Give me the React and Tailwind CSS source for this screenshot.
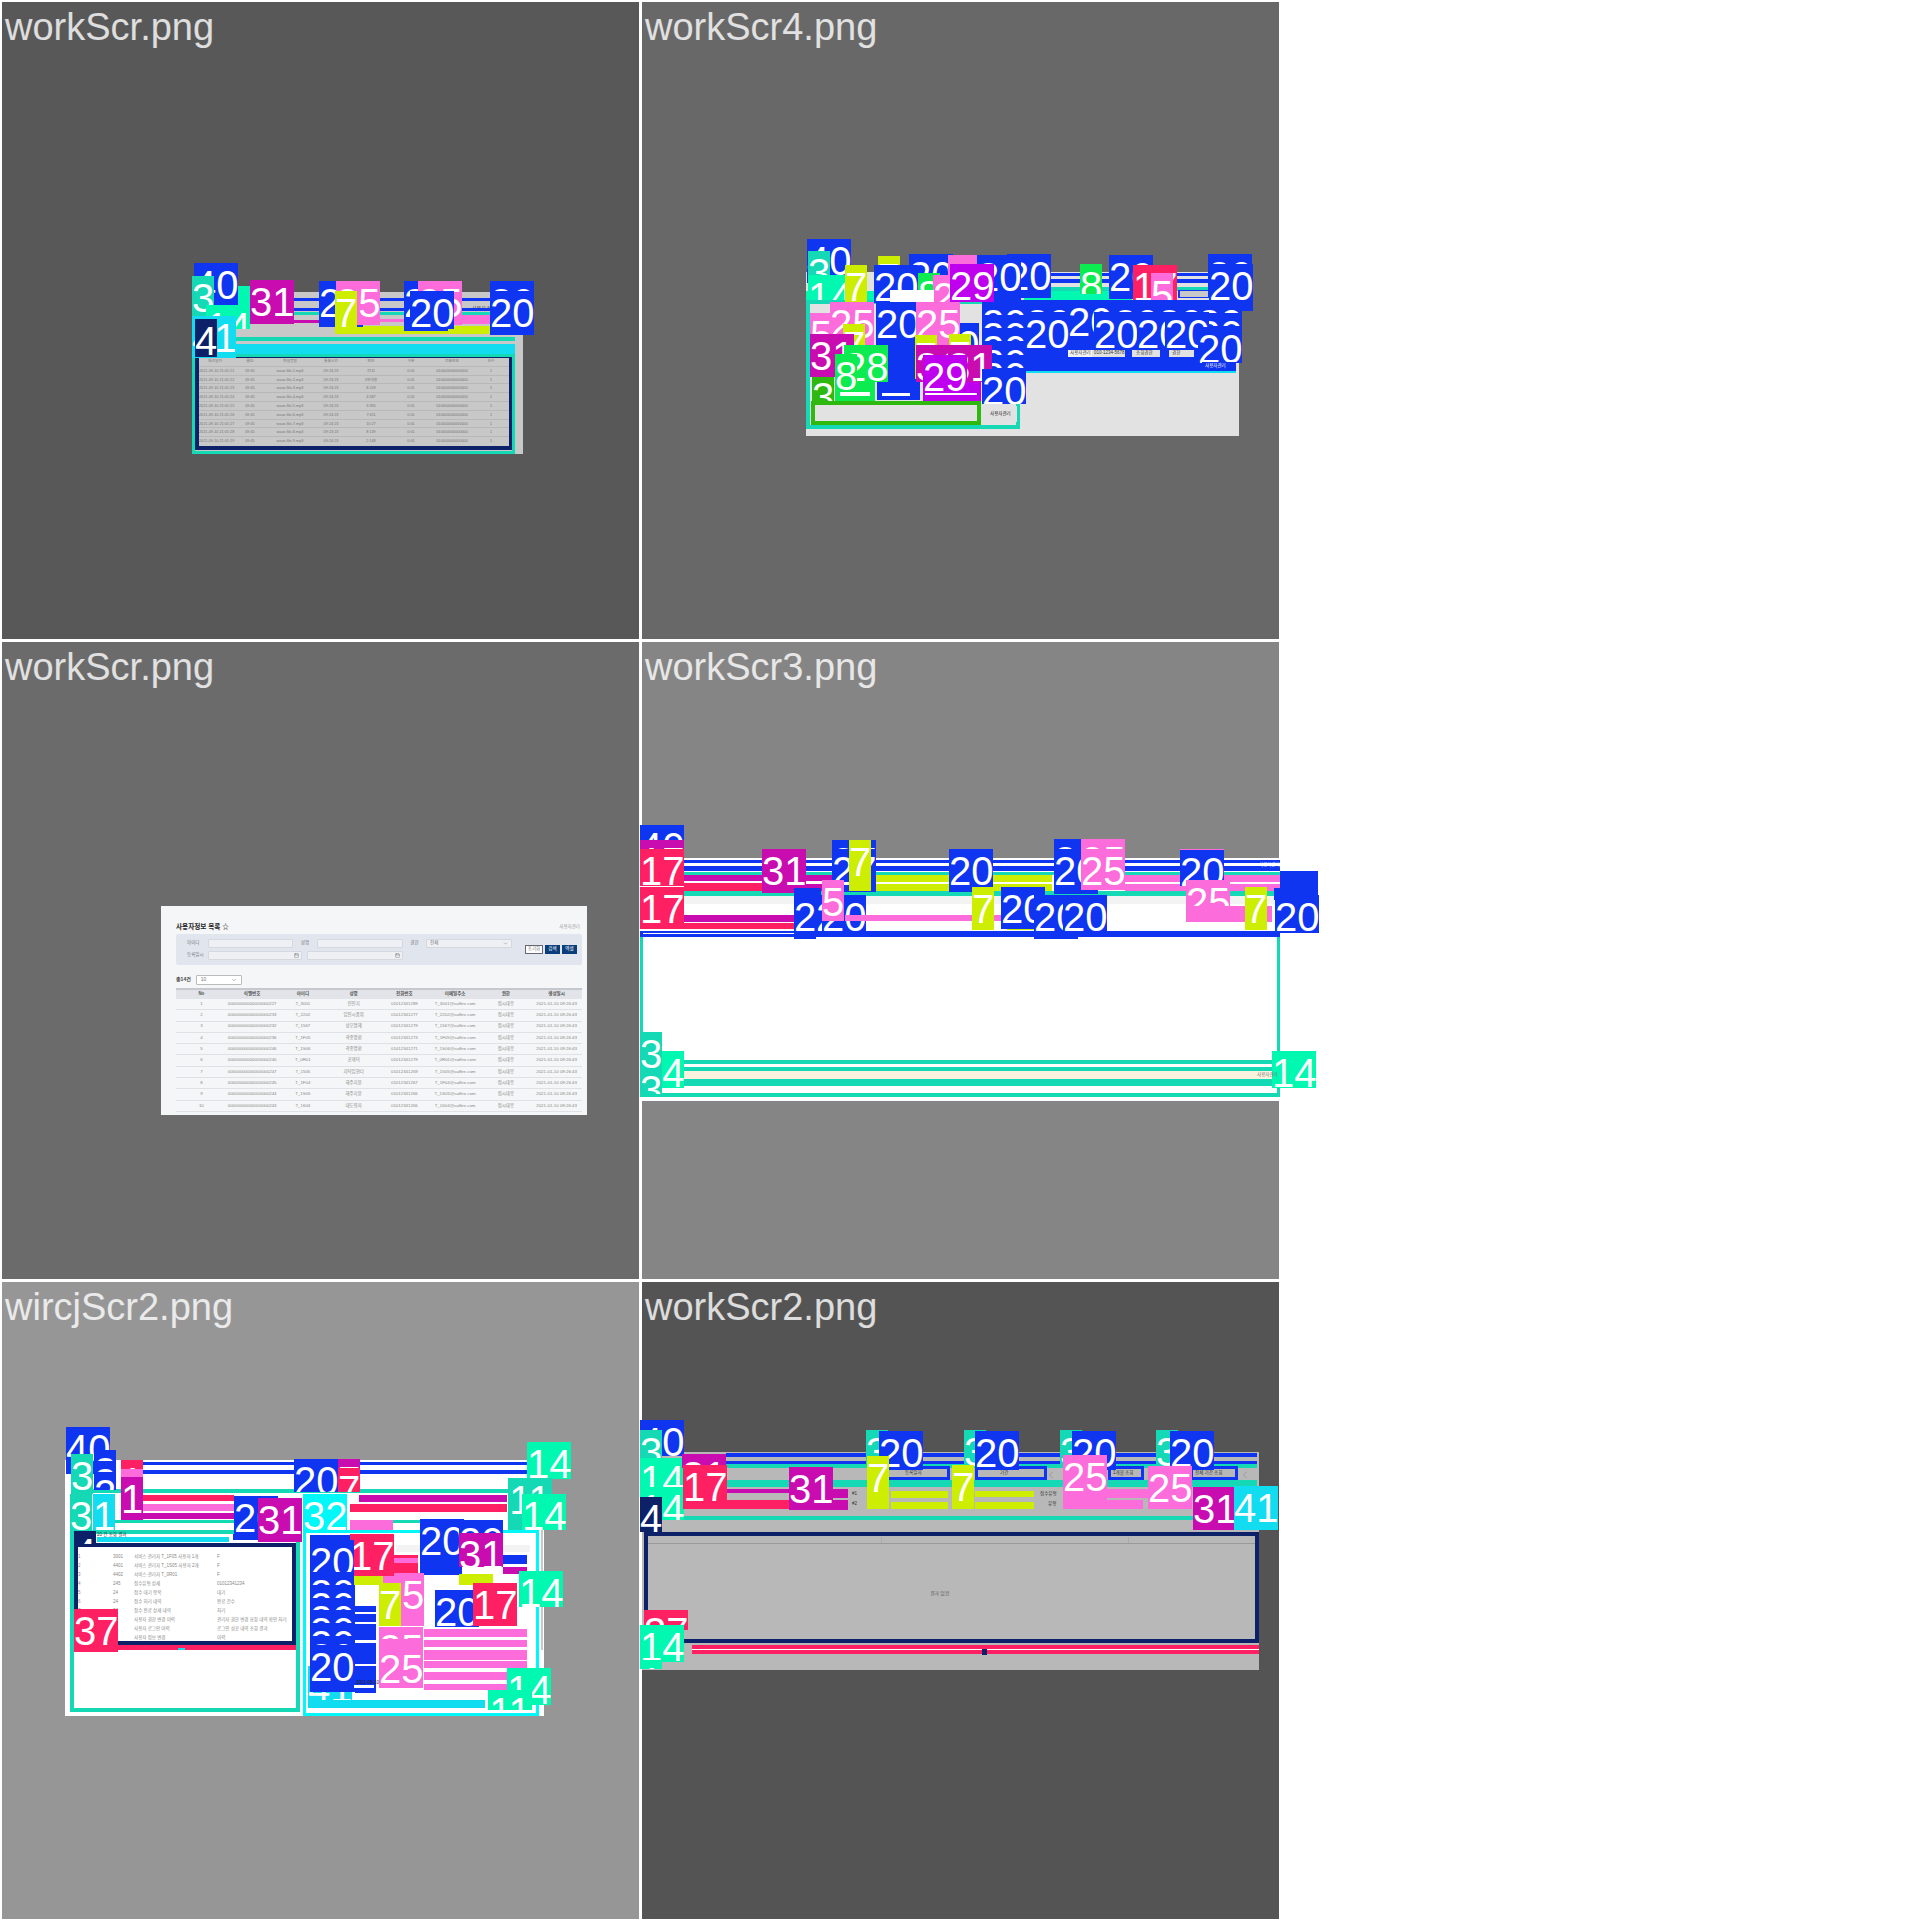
import { Calendar, ChevronDown, ChevronLeft } from "lucide-react";

const bg = {
  blue: "bg-[#1035f0]",
  teal: "bg-[#15d8b5]",
  mint: "bg-[#00f8b0]",
  magenta: "bg-[#c90cb0]",
  pink: "bg-[#fd6cdb]",
  lime: "bg-[#cdee00]",
  red: "bg-[#ff1f63]",
  cyan: "bg-[#12dcf0]",
  navy: "bg-[#0d2168]",
  green: "bg-[#0cec50]",
  purple: "bg-[#bf00ef]",
  aqua: "bg-[#00f8f8]",
  dgreen: "bg-[#2fb80f]",
  white: "bg-white",
  gray: "bg-[#c8c8c8]",
  gray2: "bg-[#b8b8b8]",
  light: "bg-[#e2e2e2]",
  pale: "bg-[#f3f3f3]",
  cream: "bg-[#f9f2de]",
};
const bd = {
  teal: "border-[#15d8b5]",
  navy: "border-[#0d2168]",
  aqua: "border-[#00f8f8]",
  blue: "border-[#1035f0]",
  dgreen: "border-[#2fb80f]",
};

// everything below is in page coordinates, the panel origin is subtracted when drawn
function Box({ o, b }) {
  const [x, y, w, h, c, t] = b;
  const style = { left: x - o[0], top: y - o[1], width: w, height: h };
  if (t) {
    return <div className={`absolute border-solid ${bd[c]}`} style={{ ...style, borderWidth: t }} />;
  }
  return <div className={`absolute ${bg[c]}`} style={style} />;
}

function Label({ o, l }) {
  const [x, y, text, c, h = 44] = l;
  return (
    <div
      className={`absolute overflow-hidden text-center text-[40px] leading-[44px] text-white ${bg[c]}`}
      style={{ left: x - o[0], top: y - o[1], width: text.length * 22, height: h }}
    >
      {text}
    </div>
  );
}

function Tiny({ o, t }) {
  const [x, y, text, cls = "text-[#333]"] = t;
  return (
    <span
      className={`absolute whitespace-nowrap font-['Liberation_Sans','Noto_Sans_CJK_KR',sans-serif] text-[4.5px] leading-[6px] ${cls}`}
      style={{ left: x - o[0], top: y - o[1] }}
    >
      {text}
    </span>
  );
}

function Panel({ name, o, color, under = [], items = [], tiny = [], children }) {
  return (
    <div className={`relative h-[637px] w-[637px] ${color}`}>
      {under.map((b, i) => <Box key={i} o={o} b={b} />)}
      {children}
      {items.map((it, i) =>
        typeof it[2] === "string"
          ? <Label key={i} o={o} l={it} />
          : <Box key={i} o={o} b={it} />
      )}
      {tiny.map((t, i) => <Tiny key={i} o={o} t={t} />)}
      <div className="absolute left-[3px] top-[3px] text-[38px] leading-[44px] text-white/80">{name}</div>
    </div>
  );
}

function MiniTable({ cols, head, rows, className, rowClass }) {
  return (
    <div className={className}>
      {head && (
        <div className={`grid ${cols}`}>
          {head.map((h, i) => <span key={i}>{h}</span>)}
        </div>
      )}
      {rows.map((r, i) => (
        <div key={i} className={`grid ${cols} ${rowClass}`}>
          {r.map((c, j) => <span key={j}>{c}</span>)}
        </div>
      ))}
    </div>
  );
}

const o1 = [2, 2];
const under1 = [[192, 292, 331, 162, "gray"]];
const rows1 = [1, 2, 3, 4, 5, 6, 7, 8, 9].map((i) => [
  `2021-09-10 21:01:${20 + i}`, "09:45", `wave-file-${i}.mp3`, "09:24:23", ["7211", "2위내용", "8:228", "4:587", "3:335", "7:411", "10:27", "8:139", "2:148"][i - 1], "0:01", "010000000000000", "1",
]);
const items1 = [
  [250, 298, 265, 3, "blue"], [250, 308, 265, 3, "blue"], [210, 312, 305, 3, "teal"],
  [294, 320, 65, 3, "magenta"], [358, 319, 132, 3, "pink"], [420, 315, 90, 9, "pink"],
  [335, 326, 172, 8, "lime"], [236, 337, 279, 4, "teal"], [192, 344, 323, 11, "cyan"],
  [195, 354, 318, 96, "navy", 4], [192, 354, 323, 100, "teal", 3],
  [215, 286, 35, 42, "mint"],
  [194, 263, "40", "blue"], [192, 276, "3", "teal", 42], [206, 305, "14", "mint", 24],
  [192, 316, "41", "cyan", 42], [195, 319, "4", "navy", 38],
  [250, 280, "31", "magenta"], [319, 281, "20", "blue", 46], [336, 281, "25", "pink"], [335, 291, "7", "lime", 43],
  [404, 281, "20", "blue", 50], [418, 281, "25", "pink"], [410, 291, "20", "blue", 38],
  [490, 281, "20", "blue", 54], [490, 291, "20", "blue", 38],
];

const o2 = [642, 2];
const under2 = [[806, 272, 433, 164, "light"]];
const items2 = [
  [1050, 273, 165, 3, "blue"], [1050, 279, 165, 4, "blue"], [1050, 287, 165, 4, "teal"],
  [806, 291, 84, 9, "mint"], [1024, 291, 108, 9, "mint"], [1178, 290, 32, 8, "blue"], [1180, 291, 28, 6, "gray"],
  [806, 300, 214, 129, "teal", 4],
  [811, 401, 170, 24, "dgreen", 4],
  [982, 300, 260, 63, "blue"], [982, 363, 254, 9, "blue"], [982, 363, 44, 41, "blue"], [1026, 371, 210, 2, "cyan"],
  [877, 344, 43, 56, "blue"], [835, 375, 40, 26, "green"], [923, 375, 58, 26, "purple"],
  [878, 256, "7", "lime"], [909, 254, "20", "blue"], [948, 255, 74, 36, "pink"], [1007, 254, "20", "blue"],
  [807, 239, "40", "blue"], [808, 251, "3", "teal"], [808, 275, "14", "mint", 25], [845, 265, "7", "lime"],
  [874, 265, "20", "blue", 38], [918, 273, "8", "green"], [933, 275, "2", "pink"],
  [977, 255, "20", "blue", 46], [950, 264, "29", "purple", 38],
  [1080, 264, "8", "green", 30], [1109, 255, "20", "blue"], [1133, 265, "17", "red", 35], [1151, 273, "5", "pink", 27],
  [1208, 254, "20", "blue"], [1209, 264, "20", "blue", 47],
  [890, 290, 44, 12, "white"],
  ...[982, 1026, 1070, 1114, 1158, 1198].map((x) => [x, 302, "20", "blue", 13]),
  ...[1026, 1158, 1198].map((x) => [x, 313, "20", "blue", 13]),
  ...[315, 328, 342, 355].map((y) => [982, y, "20", "blue", 13]),
  [1068, 300, "20", "blue", 44], [1025, 312, "20", "blue", 38], [1094, 312, "20", "blue", 38], [1137, 312, "20", "blue", 38], [1165, 312, "20", "blue", 38], [1198, 327, "20", "blue", 36],
  [876, 302, "20", "blue"], [935, 323, "20", "blue"],
  [916, 302, "25", "pink", 44], [830, 302, "25", "pink", 48], [810, 313, "5", "pink"],
  [843, 324, "7", "lime"], [915, 335, "7", "lime"], [949, 334, "7", "lime"],
  [812, 375, "3", "dgreen", 26],
  [810, 334, "31", "magenta", 43], [844, 345, "28", "green", 37], [835, 354, "8", "green", 38],
  [916, 345, "31", "magenta", 37], [948, 345, "31", "magenta", 37], [923, 355, "29", "purple", 38],
  [982, 369, "20", "blue", 35],
  [1068, 350, 24, 7, "pale"], [1092, 350, 33, 7, "light"], [1132, 350, 28, 7, "light"], [1169, 350, 25, 7, "light"],
  [1202, 362, 34, 7, "blue"], [986, 406, 31, 16, "light"], [882, 393, 28, 3, "white"], [840, 392, 30, 4, "white"], [925, 393, 52, 2, "white"],
];
const tiny2 = [
  [1070, 350, "사용자관리"], [1094, 350, "010-1234-5678"], [1136, 350, "조회권한"], [1172, 350, "권한"],
  [990, 411, "사용자관리", "text-[#111]"], [1205, 363, "사용자관리", "text-white"],
];

const o3 = [2, 642];
const rows3 = [
  ["1", "00000000000000000227", "T_3001", "진민지", "01012341289", "T_3001@saffire.com", "접시대응", "2021-01-10 09:26:43"],
  ["2", "00000000000000000233", "T_2202", "임민시품위", "01012341277", "T_2202@saffire.com", "접시대응", "2021-01-10 09:26:43"],
  ["3", "00000000000000000232", "T_1567", "성오명혜", "01012341279", "T_1567@saffire.com", "접시대응", "2021-01-10 09:26:43"],
  ["4", "00000000000000000236", "T_1F05", "곽종명환", "01012341273", "T_1F05@saffire.com", "접시대응", "2021-01-10 09:26:43"],
  ["5", "00000000000000000246", "T_1S06", "곽종명환", "01012341271", "T_1S06@saffire.com", "접시대응", "2021-01-10 09:26:43"],
  ["6", "00000000000000000240", "T_0R01", "공제덕", "01012341279", "T_0R01@saffire.com", "접시대응", "2021-01-10 09:26:43"],
  ["7", "00000000000000000247", "T_1505", "지덕임현더", "01012341269", "T_1505@saffire.com", "접시대응", "2021-01-10 09:26:43"],
  ["8", "00000000000000000245", "T_1F04", "해주지윤", "01012341267", "T_1F04@saffire.com", "접시대응", "2021-01-10 09:26:43"],
  ["9", "00000000000000000244", "T_1S05", "해주지윤", "01012341266", "T_1S05@saffire.com", "접시대응", "2021-01-10 09:26:43"],
  ["10", "00000000000000000243", "T_1604", "대도영자", "01012341266", "T_1604@saffire.com", "접시대응", "2021-01-10 09:26:43"],
];

function UserList() {
  const input = "h-[9px] rounded-[1px] border border-[#d5d8de] bg-[#eef0f4]";
  return (
    <div className="absolute left-[159px] top-[264px] flex h-[209px] w-[426px] flex-col bg-[#f5f6f7] pl-[15px] pr-[5px] pt-[15px] font-['Liberation_Sans','Noto_Sans_CJK_KR',sans-serif] text-[#777]">
      <div className="flex h-[12px] items-center justify-between">
        <span className="text-[6.6px] font-bold text-[#222]">사용자정보 목록 ☆</span>
        <span className="pr-[2px] text-[4.5px] text-[#999]">사용자관리</span>
      </div>
      <div className="mt-[1px] grid h-[31px] grid-cols-[32px_85px_24px_86px_23px_86px_13px_1fr] content-center items-center gap-y-[3px] rounded-[2px] bg-[#e0e5ee] text-[4.5px]">
        <span className="pl-[11px]">아이디</span>
        <div className={input} />
        <span className="text-center">성명</span>
        <div className={input} />
        <span className="text-center">권한</span>
        <div className={`${input} flex items-center justify-between px-[3px]`}><span>전체</span><ChevronDown size={5} /></div>
        <span />
        <div className="row-span-2 flex items-center gap-[2px]">
          <span className="flex h-[9px] w-[18px] items-center justify-center border border-[#667] bg-white">초기화</span>
          <span className="flex h-[9px] w-[15px] items-center justify-center bg-[#0a3d7c] text-white">검색</span>
          <span className="flex h-[9px] w-[15px] items-center justify-center bg-[#0a3d7c] text-white">엑셀</span>
        </div>
        <span className="pl-[11px]">등록일시</span>
        <div className="col-span-3 flex gap-[5px]">
          <div className={`${input} flex w-[94px] items-center justify-end pr-[2px]`}><Calendar size={5} /></div>
          <div className={`${input} flex w-[96px] items-center justify-end pr-[2px]`}><Calendar size={5} /></div>
        </div>
        <span className="col-span-3" />
      </div>
      <div className="mt-[10px] flex h-[10px] items-center gap-[5px] text-[5px]">
        <span className="font-bold text-[#444]">총14건</span>
        <div className="flex h-[10px] w-[46px] items-center justify-between rounded-[1px] border border-[#bbb] bg-white px-[4px]"><span>10</span><ChevronDown size={6} /></div>
      </div>
      <div className="mt-[3px] grid h-[11px] grid-cols-8 items-center border-t-2 border-[#c5c8ce] bg-[#e2e4e9] text-center text-[4.5px] font-bold text-[#555]">
        {["No", "식별번호", "아이디", "성명", "전화번호", "이메일주소", "권한", "생성일시"].map((h) => <span key={h}>{h}</span>)}
      </div>
      <MiniTable
        cols="grid-cols-8"
        rows={rows3}
        className="text-center text-[4.4px] text-[#888]"
        rowClass="h-[11.3px] items-center border-b border-[#dfe1e4]"
      />
    </div>
  );
}

const o4 = [642, 642];
const under4 = [[642, 858, 637, 243, "white"]];
const items4 = [
  [684, 860, 596, 3, "blue"], [684, 866, 596, 5, "blue"], [684, 872, 596, 3, "teal"],
  [684, 875, 78, 6, "magenta"], [684, 883, 78, 8, "red"], [806, 875, 26, 6, "magenta"], [806, 884, 26, 8, "magenta"],
  [849, 875, 203, 7, "lime"], [849, 884, 203, 7, "lime"],
  [1125, 875, 155, 7, "pink"], [1125, 884, 155, 7, "pink"],
  [684, 891, 596, 5, "teal"], [684, 896, 596, 8, "pale"],
  [684, 915, 110, 7, "magenta"], [684, 923, 110, 6, "red"],
  [1007, 924, 27, 6, "lime"],
  [640, 931, 640, 6, "blue"], [643, 933, 155, 1, "white"],
  [640, 937, 3, 160, "teal"], [1277, 937, 3, 160, "teal"],
  [684, 1060, 593, 4, "teal"], [684, 1067, 593, 4, "teal"], [684, 1071, 588, 8, "cream"], [684, 1079, 593, 7, "teal"], [640, 1093, 640, 4, "teal"],
  [640, 825, "40", "blue"], [640, 840, "17", "magenta", 12], [640, 849, "17", "red", 37], [640, 887, "17", "red", 42],
  [762, 849, "31", "magenta"], [832, 840, "27", "blue", 9], [832, 849, "27", "blue", 43], [849, 840, "7", "lime", 51],
  [949, 849, "20", "blue", 43], [1054, 839, "20", "blue", 12], [1054, 849, "20", "blue", 45], [1081, 839, "25", "pink", 12], [1081, 849, "25", "pink", 41],
  [1180, 849, "20", "pink", 36], [1180, 850, "20", "blue", 36],
  [1280, 871, 38, 24, "blue"], [1274, 888, "20", "blue", 12],
  [794, 888, 27, 10, "blue"], [794, 895, "2", "blue", 44], [816, 895, "2", "blue", 36],
  [822, 895, "20", "blue", 36], [822, 880, "5", "pink", 41], [845, 915, 190, 6, "pink"],
  [1186, 880, "25", "pink", 42], [1186, 906, 86, 16, "pink"], [1245, 887, "7", "lime", 43],
  [972, 887, "7", "lime", 43], [1001, 887, "20", "blue", 42], [1034, 895, "20", "blue", 44], [1063, 895, "20", "blue", 36],
  [1275, 895, "20", "blue", 38],
  [640, 1051, "14", "mint", 37], [640, 1032, "3", "teal", 44], [640, 1068, "3", "teal", 26], [1272, 1051, "14", "mint", 37],
];
const tiny4 = [
  [1259, 862, "사용자관리", "text-white"], [1257, 1072, "사용자관리", "text-[#777]"],
];

const o5 = [2, 1282];
const under5 = [[65, 1460, 479, 256, "white"], [396, 1545, 134, 7, "pale"]];
const rows5 = [
  ["1", "3001", "서비스 관리자 T_1F05 사용자 1개", "F"],
  ["2", "4401", "서비스 관리자 T_1S05 사용자 2개", "F"],
  ["3", "4402", "서비스 관리자 T_0R01", "F"],
  ["4", "245", "접수유형 상세", "01012341234"],
  ["5", "24", "접수 대기 항목", "대기"],
  ["6", "24", "접수 처리 내역", "완료 건수"],
  ["7", "24", "접수 완료 상세 내역", "처리"],
  ["8", "21", "사용자 권한 변경 이력", "관리자 권한 변경 요청 내역 확인 처리"],
  ["9", "21", "사용자 로그인 이력", "로그인 성공 내역 조회 결과"],
  ["10", "21", "사용자 정보 변경", "이력"],
];
const items5 = [
  [142, 1462, 152, 3, "blue"], [142, 1470, 152, 4, "blue"], [360, 1462, 167, 3, "blue"], [360, 1470, 167, 4, "blue"],
  [71, 1489, 461, 4, "teal"],
  [142, 1495, 92, 6, "red"], [142, 1504, 92, 7, "pink"], [142, 1513, 92, 6, "magenta"], [115, 1520, 119, 3, "teal"],
  [359, 1495, 148, 7, "magenta"], [350, 1504, 157, 8, "red"],
  [70, 1530, 230, 182, "teal", 4], [303, 1530, 236, 186, "aqua", 3],
  [74, 1543, 222, 102, "navy", 4], [118, 1645, 178, 5, "red"], [97, 1537, 132, 5, "cyan"],
  [233, 1534, 30, 6, "blue"], [282, 1535, 13, 5, "mint"], [264, 1540, 13, 2, "magenta"],
  [178, 1648, 7, 2, "cyan"], [541, 1530, 2, 120, "gray"],
  [308, 1666, "41", "cyan", 42], [308, 1700, 177, 8, "cyan"],
  [310, 1535, 45, 157, "blue"], [355, 1606, 21, 87, "blue"], [355, 1612, 21, 2, "white"], [355, 1622, 21, 2, "white"], [355, 1640, 21, 3, "white"], [355, 1664, 21, 2, "white"], [314, 1685, 60, 3, "white"],
  [350, 1520, 43, 10, "pink"], [393, 1520, 27, 3, "teal"], [393, 1555, 25, 19, "red"], [393, 1558, 25, 5, "pink"],
  [350, 1574, 33, 11, "lime"], [393, 1619, 20, 7, "lime"],
  [424, 1629, 103, 8, "pink"], [424, 1640, 103, 7, "pink"], [424, 1650, 103, 10, "pink"], [424, 1661, 103, 7, "pink"], [424, 1672, 103, 8, "pink"], [424, 1684, 103, 6, "pink"],
  [420, 1555, 42, 20, "blue"], [503, 1555, 24, 9, "blue"], [503, 1567, 24, 7, "magenta"], [459, 1574, 34, 11, "lime"],
  [383, 1573, 41, 53, "pink"],
  [66, 1427, "40", "blue", 47], [294, 1459, "20", "blue", 33], [338, 1459, "7", "magenta", 12], [338, 1468, "7", "red", 24],
  [527, 1442, "14", "mint", 37], [94, 1450, "2", "blue", 14], [94, 1461, "2", "blue", 13], [94, 1472, "2", "blue", 18], [121, 1460, "1", "red", 9], [121, 1469, "1", "pink", 9], [121, 1477, "1", "magenta", 43],
  [71, 1454, "3", "teal", 40], [70, 1494, "3", "teal", 37], [93, 1494, "1", "cyan", 36],
  [234, 1496, "20", "blue", 40], [258, 1498, "31", "magenta", 44], [303, 1494, "32", "aqua", 36],
  [508, 1478, "11", "teal", 52], [522, 1494, "14", "mint", 36],
  [74, 1531, "4", "navy", 13], [74, 1609, "37", "red", 43],
  [420, 1519, "20", "blue", 36], [459, 1520, "20", "blue", 13], [459, 1533, "31", "magenta", 34],
  [350, 1534, "17", "red", 42], [310, 1540, "20", "blue", 32],
  ...[1572, 1585, 1598, 1610, 1623, 1636].map((y) => [310, y, "20", "blue", 13]),
  [310, 1645, "20", "blue", 44],
  [379, 1583, "7", "lime", 43], [402, 1573, "5", "pink", 44],
  [379, 1627, "25", "pink", 12], [379, 1639, "25", "pink", 8], [379, 1647, "25", "pink", 41],
  [435, 1590, "20", "blue", 37], [473, 1583, "17", "red", 43], [519, 1571, "14", "mint", 36],
  [507, 1668, "14", "mint", 37], [488, 1690, "11", "mint", 20],
];
const tiny5 = [
  [97, 1532, "20 건 조회 결과", "text-[#333]"], [356, 1680, "2021-09-10", "text-[#222]"],
];

const o6 = [642, 1282];
const under6 = [[642, 1452, 617, 218, "gray2"]];
const items6 = [
  [726, 1453, 531, 4, "blue"], [726, 1461, 531, 3, "blue"], [660, 1464, 597, 4, "teal"], [727, 1480, 530, 7, "teal"],
  [727, 1489, 62, 4, "magenta"], [727, 1500, 62, 9, "red"], [833, 1489, 15, 9, "magenta"], [833, 1500, 15, 10, "magenta"],
  [891, 1491, 57, 7, "lime"], [891, 1502, 57, 7, "lime"], [975, 1491, 59, 6, "lime"], [975, 1502, 59, 7, "lime"],
  [1107, 1489, 41, 9, "pink"], [1063, 1500, 80, 9, "pink"],
  [663, 1516, 593, 4, "teal"],
  [879, 1466, 71, 14, "blue", 3], [975, 1466, 72, 14, "blue", 3], [1108, 1466, 36, 14, "blue", 3], [1190, 1466, 48, 14, "blue", 3],
  [644, 1532, 615, 111, "navy", 4], [692, 1645, 567, 9, "red"], [692, 1649, 567, 1, "white"], [982, 1649, 5, 6, "navy"],
  [866, 1430, "3", "teal", 36], [964, 1430, "3", "teal", 36], [1060, 1430, "3", "teal", 36], [1156, 1430, "3", "teal", 36],
  [879, 1431, "20", "blue", 39], [975, 1431, "20", "blue", 39], [1072, 1431, "20", "blue", 39], [1170, 1431, "20", "blue", 39],
  [640, 1420, "40", "blue", 36], [640, 1430, "3", "teal", 44], [640, 1458, "14", "mint", 40], [640, 1487, "14", "mint", 33],
  [682, 1454, "31", "magenta", 14], [683, 1465, "17", "red"], [789, 1467, "31", "magenta", 43],
  [867, 1456, "7", "lime", 53], [952, 1465, "7", "lime", 44],
  [1063, 1455, "25", "pink", 54], [1148, 1466, "25", "pink", 43],
  [1193, 1487, "31", "magenta", 43], [1234, 1486, "41", "cyan", 44],
  [640, 1497, "4", "navy", 35], [644, 1610, "37", "red", 20], [640, 1625, "14", "mint", 37], [640, 1660, "1", "mint", 9],
];
const tiny6 = [
  [905, 1470, "등록일자"], [1000, 1470, "기간"], [1113, 1470, "1개월 조회"], [1195, 1470, "전체 기간 조회"],
  [852, 1491, "#1"], [852, 1501, "#2"], [1040, 1491, "접수유형"], [1048, 1501, "유형"],
];

export default function App() {
  return (
    <div className="grid min-h-[1920px] w-[1920px] grid-cols-[repeat(2,637px)] content-start gap-[3px] bg-white p-[2px] font-['Liberation_Sans',sans-serif]">
      <Panel name="workScr.png" o={o1} color="bg-[#585858]" under={under1} items={items1}>
        <MiniTable
          cols="grid-cols-[32px_38px_42px_40px_40px_40px_42px_1fr]"
          head={["처리일자", "콜ID", "파일명칭", "통화시간", "번호", "구분", "전화번호", "건수"]}
          rows={rows1}
          className="absolute left-[197px] top-[355px] w-[310px] bg-[#c8c8c8] text-center font-['Liberation_Sans','Noto_Sans_CJK_KR',sans-serif] text-[3.8px] leading-[8.8px] text-[#777]"
          rowClass="h-[8.8px] whitespace-nowrap border-t border-[#b8b8b8]"
        />
        <span className="absolute left-[470px] top-[302px] font-['Noto_Sans_CJK_KR',sans-serif] text-[5px] text-[#333]">사용자 목록</span>
      </Panel>
      <Panel name="workScr4.png" o={o2} color="bg-[#686868]" under={under2} items={items2} tiny={tiny2} />
      <Panel name="workScr.png" o={o3} color="bg-[#6b6b6b]">
        <UserList />
      </Panel>
      <Panel name="workScr3.png" o={o4} color="bg-[#858585]" under={under4} items={items4} tiny={tiny4} />
      <Panel name="wircjScr2.png" o={o5} color="bg-[#969696]" under={under5} items={items5} tiny={tiny5}>
        <MiniTable
          cols="grid-cols-[35px_21px_83px_1fr]"
          rows={rows5}
          className="absolute left-[76px] top-[270px] w-[215px] font-['Liberation_Sans','Noto_Sans_CJK_KR',sans-serif] text-[4.5px] leading-[9px] text-[#888]"
          rowClass="h-[9px] whitespace-nowrap"
        />
      </Panel>
      <Panel name="workScr2.png" o={o6} color="bg-[#545454]" under={under6} items={items6} tiny={tiny6}>
        <div className="absolute left-[4px] top-[255px] grid h-[7px] w-[611px] grid-cols-[236px_247px_1fr] border-b border-[#999]">
          <span className="border-r border-[#aaa]" />
          <span className="border-r border-[#aaa]" />
          <span />
        </div>
        <span className="absolute left-[288px] top-[307px] font-['Noto_Sans_CJK_KR',sans-serif] text-[5px] text-[#666]">결과 없음</span>
        <ChevronLeft size={12} className="absolute left-[403px] top-[187px] text-[#999]" />
        <ChevronLeft size={12} className="absolute left-[597px] top-[187px] text-[#999]" />
      </Panel>
    </div>
  );
}
